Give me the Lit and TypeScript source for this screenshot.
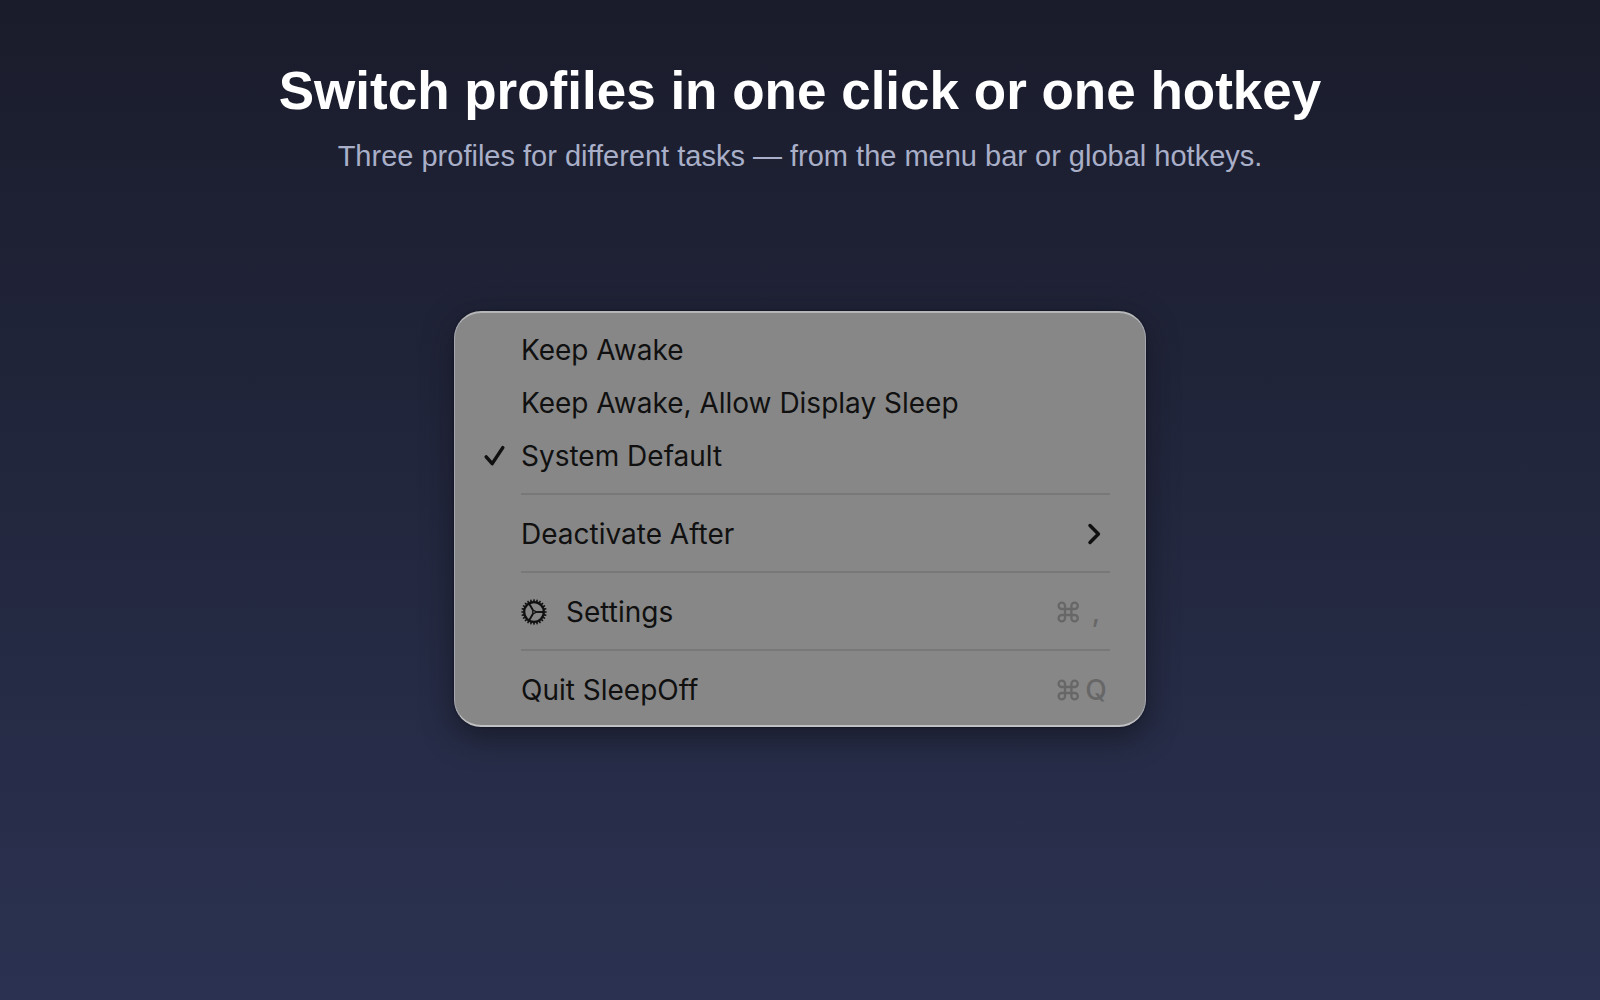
import { LitElement, css, html, svg, nothing } from "lit";
import { customElement, property, state } from "lit/decorators.js";

const checkIcon = html`<svg class="icon" width="24" height="24" viewBox="0 0 24 24" aria-hidden="true">
  <path d="M4.2 12.8 L10.2 19.6 L20.8 3.6" fill="none" stroke="currentColor" stroke-width="3.5" stroke-linecap="round" stroke-linejoin="round" />
</svg>`;

const chevronIcon = html`<svg class="icon" width="24" height="24" viewBox="0 0 24 24" aria-hidden="true">
  <path d="M8 3.6 L16.4 12 L8 20.4" fill="none" stroke="currentColor" stroke-width="3.5" stroke-linecap="round" stroke-linejoin="round" />
</svg>`;

const commandIcon = html`<svg class="icon" width="24" height="24" viewBox="0 0 24 24" role="img" aria-label="Command">
  <path
    d="M9 5.8 A3.2 3.2 0 1 0 5.8 9 H18.6 A3.2 3.2 0 1 0 15.4 5.8 V18.2 A3.2 3.2 0 1 0 18.6 15 H5.8 A3.2 3.2 0 1 0 9 18.2 Z"
    fill="none" stroke="currentColor" stroke-width="2.3" stroke-linejoin="round" />
</svg>`;

const teeth = Array.from({ length: 24 }, (_, i) => i * 15);
const spokes = [0, 120, 240];

const gearIcon = html`<svg class="icon" width="26" height="26" viewBox="-13 -13 26 26" aria-hidden="true">
  <circle r="9.8" fill="none" stroke="currentColor" stroke-width="2.2" />
  ${teeth.map((a) => svg`<path d="M10.4 -1 L12.8 -0.6 V0.6 L10.4 1 Z" fill="currentColor" transform="rotate(${a})" />`)}
  ${spokes.map((a) => svg`<path d="M1.4 0 H9.6" stroke="currentColor" stroke-width="1.9" transform="rotate(${a})" />`)}
  <circle r="1.4" fill="none" stroke="currentColor" stroke-width="1.3" />
</svg>`;

@customElement("menu-row")
class MenuRow extends LitElement {
  @property() label = "";
  @property() key = "";
  @property({ type: Boolean }) radio = false;
  @property({ type: Boolean }) checked = false;
  @property({ type: Boolean }) submenu = false;
  @property({ type: Boolean }) gear = false;

  static styles = css`
    :host {
      display: block;
    }
    .row {
      display: grid;
      grid-template-columns: 39px 1fr auto;
      align-items: center;
      width: 100%;
      height: 53px;
      margin: 0;
      padding: 0;
      border: 0;
      background: none;
      color: #101010;
      font: 400 28px/34px Inter, "Liberation Sans", sans-serif;
      text-align: left;
    }
    .icon {
      display: block;
      flex: none;
    }
    .label {
      display: flex;
      align-items: center;
      gap: 19px;
    }
    .shortcut {
      display: flex;
      align-items: center;
      gap: 4px;
      padding-right: 2px;
      color: #676767;
      font-weight: 500;
    }
    .key {
      width: 24px;
      text-align: center;
    }
    .arrow {
      padding-right: 4px;
    }
  `;

  render() {
    return html`<button
      class="row"
      type="button"
      role=${this.radio ? "menuitemradio" : "menuitem"}
      aria-checked=${this.radio ? String(this.checked) : nothing}
      aria-haspopup=${this.submenu ? "menu" : nothing}
    >
      <span class="mark">${this.checked ? checkIcon : nothing}</span>
      <span class="label">${this.gear ? gearIcon : nothing}<span>${this.label}</span></span>
      ${this.key ? html`<span class="shortcut">${commandIcon}<span class="key">${this.key}</span></span>` : nothing}
      ${this.submenu ? html`<span class="arrow">${chevronIcon}</span>` : nothing}
    </button>`;
  }
}

@customElement("app-root")
class AppRoot extends LitElement {
  @state() private profile = "System Default";

  private profiles = ["Keep Awake", "Keep Awake, Allow Display Sleep", "System Default"];

  static styles = css`
    :host {
      display: block;
    }
    .page {
      box-sizing: border-box;
      min-height: 100vh;
      padding: 59px 24px;
      display: flex;
      flex-direction: column;
      align-items: center;
      background: linear-gradient(180deg, #1a1c2b 0%, #2b3251 100%);
      font-family: "Liberation Sans", Arial, sans-serif;
      text-align: center;
    }
    .title {
      margin: 0;
      color: #fff;
      font-size: 53px;
      line-height: 64px;
      font-weight: 700;
    }
    .subtitle {
      margin: 17px 0 0;
      color: #a9afc8;
      font-size: 29px;
      line-height: 32px;
    }
    .menu {
      box-sizing: border-box;
      width: 100%;
      max-width: 692px;
      margin-top: 139px;
      padding: 10px 35px 9px 27px;
      border: 1px solid #a4a7b0;
      border-top: 2px solid #b4b6b8;
      border-bottom: 2px solid #c0c1c3;
      border-radius: 27px;
      background: #878787;
      box-shadow: 0 0 2px rgba(0, 0, 10, 0.7), 0 10px 30px rgba(16, 16, 24, 0.6);
    }
    .line {
      height: 2px;
      margin: 11px 0 12px 39px;
      border: 0;
      background: #787878;
    }
  `;

  render() {
    return html`<main class="page">
      <h1 class="title">Switch profiles in one click or one hotkey</h1>
      <p class="subtitle">Three profiles for different tasks — from the menu bar or global hotkeys.</p>
      <div class="menu" role="menu">
        ${this.profiles.map(
          (name) => html`<menu-row
            label=${name}
            radio
            ?checked=${this.profile === name}
            @click=${() => (this.profile = name)}
          ></menu-row>`,
        )}
        <hr class="line" />
        <menu-row label="Deactivate After" submenu></menu-row>
        <hr class="line" />
        <menu-row label="Settings" key="," gear></menu-row>
        <hr class="line" />
        <menu-row label="Quit SleepOff" key="Q"></menu-row>
      </div>
    </main>`;
  }
}
